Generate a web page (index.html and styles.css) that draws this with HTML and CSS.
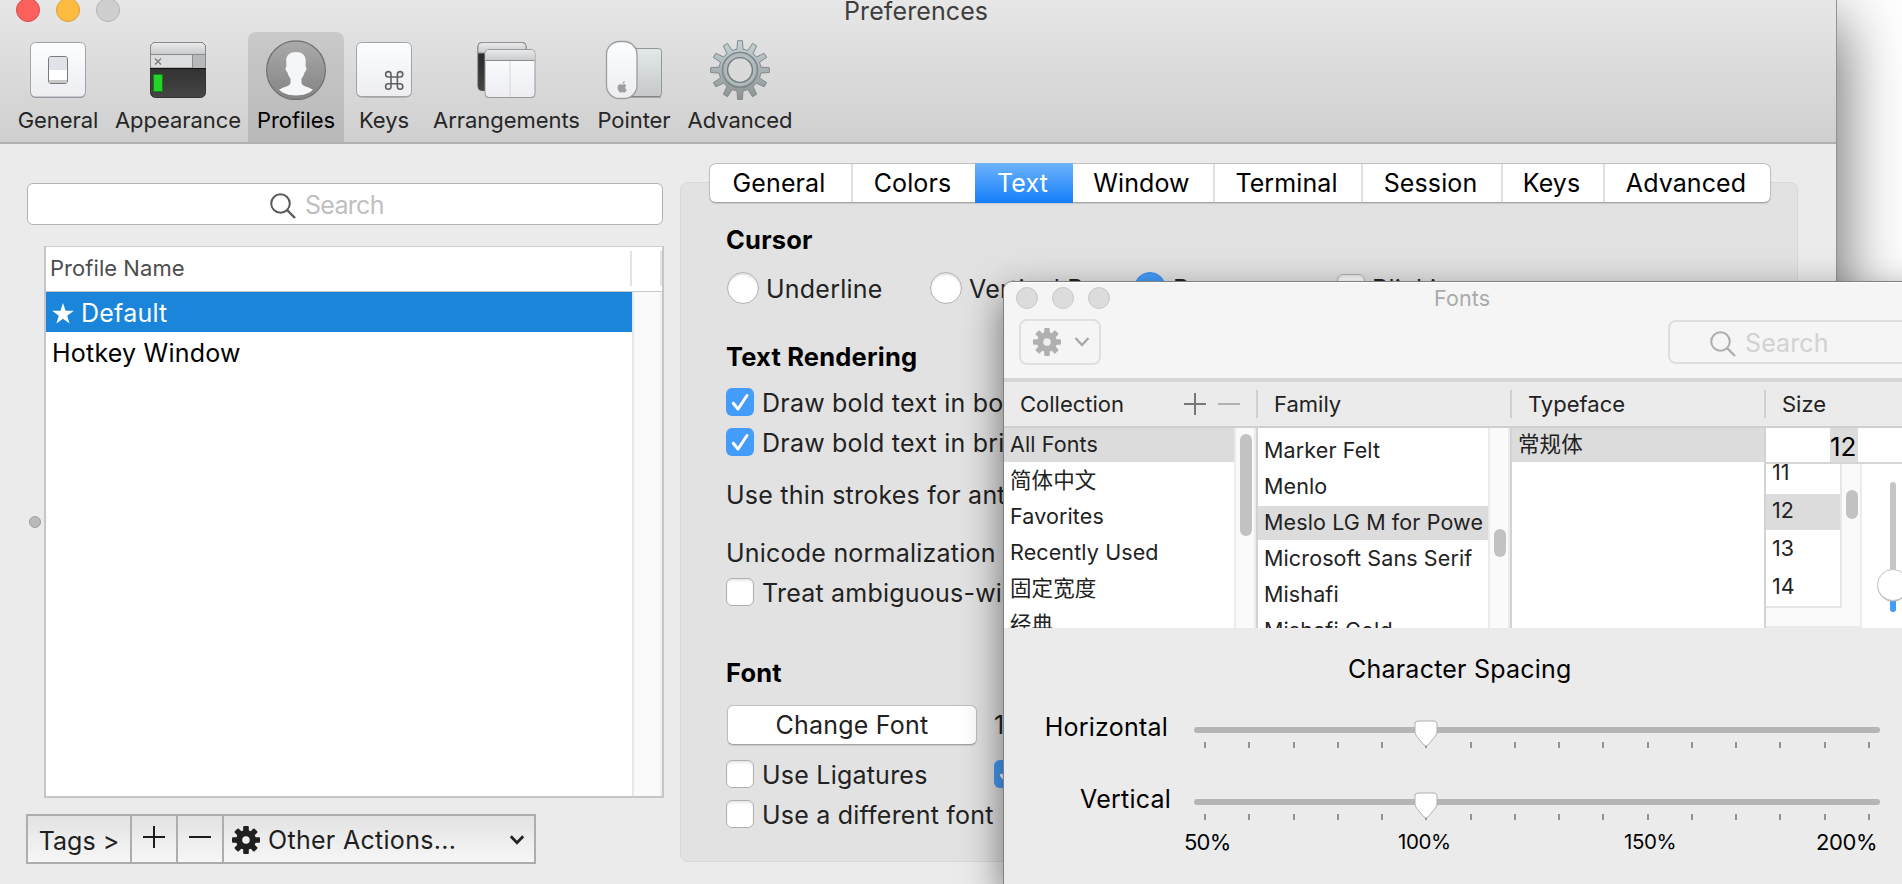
FILE: index.html
```html
<!DOCTYPE html>
<html lang="en">
<head>
<meta charset="utf-8">
<title>Preferences</title>
<link rel="stylesheet" href="styles.css">
</head>
<body>
<svg class="defs" width="0" height="0" aria-hidden="true">
  <defs>
    <linearGradient id="white" x1="0" y1="0" x2="0" y2="1"><stop offset="0" stop-color="#fbfeff"/><stop offset="1" stop-color="#ededf2"/></linearGradient>
    <linearGradient id="bar" x1="0" y1="0" x2="0" y2="1"><stop offset="0" stop-color="#e9eaec"/><stop offset="1" stop-color="#c9cbcd"/></linearGradient>
    <linearGradient id="dark" x1="0" y1="0" x2="0" y2="1"><stop offset="0" stop-color="#222"/><stop offset="1" stop-color="#454545"/></linearGradient>
    <linearGradient id="disc" x1="0" y1="0" x2="0" y2="1"><stop offset="0" stop-color="#aaa"/><stop offset="1" stop-color="#838383"/></linearGradient>
    <linearGradient id="pad" x1="0" y1="0" x2="0" y2="1"><stop offset="0" stop-color="#e3e9e9"/><stop offset="1" stop-color="#c6c8c9"/></linearGradient>
    <linearGradient id="steel" gradientUnits="userSpaceOnUse" x1="0" y1="0" x2="0" y2="60"><stop offset="0" stop-color="#c6d3d7"/><stop offset="1" stop-color="#8b9192"/></linearGradient>
    <symbol id="gear" viewBox="-14 -14 28 28">
      <g fill="currentColor">
        <g id="cogs"><rect x="-2.8" y="-14" width="5.6" height="28" rx="1"/><rect x="-14" y="-2.8" width="28" height="5.6" rx="1"/></g>
        <use href="#cogs" transform="rotate(45)"/>
        <circle r="10"/>
      </g>
      <circle class="gear-hole" r="3.8"/>
    </symbol>
    <symbol id="lens" viewBox="0 0 26 26"><circle cx="10.5" cy="10.5" r="9.3" fill="none" stroke="currentColor" stroke-width="2"/><path d="M17 17l8 8" stroke="currentColor" stroke-width="2.4"/></symbol>
    <symbol id="tick" viewBox="0 0 28 28"><path d="M7.300 15.200l4.700 5.800 9-13.500" fill="none" stroke="#fff" stroke-width="3" stroke-linecap="round" stroke-linejoin="round"/></symbol>
  </defs>
</svg>

<main class="window prefs">
  <header class="toolbar">
    <div class="lights"><i class="light red"></i><i class="light amber"></i><i class="light idle"></i></div>
    <h1 class="title">Preferences</h1>
    <nav class="tools">
      <div class="tool w-general">
        <svg width="60" height="60" viewBox="0 0 60 60"><rect x="2.500" y="3" width="55" height="55" rx="5" fill="#8f8f94"/><rect x="2.500" y="2.500" width="55" height="54.500" rx="5" fill="url(#white)" stroke="#a2a3a8"/><rect x="20.500" y="16.500" width="19" height="27" rx="2.500" fill="#fff" stroke="#777a7e"/><rect x="21" y="17" width="18" height="13" rx="2" fill="#dfe2e7"/><rect x="21" y="40" width="18" height="3" fill="#c8c8c8"/></svg>
        <span>General</span></div>
      <div class="tool w-appearance">
        <svg width="60" height="60" viewBox="0 0 60 60"><rect x="2.500" y="2.500" width="55" height="55" rx="5" fill="url(#dark)" stroke="#333"/><path d="M2.500 28V7.500a5 5 0 0 1 5-5h45a5 5 0 0 1 5 5V28z" fill="#dcdddf" stroke="#8a8a8c"/><path d="M3 14V7.500a4.500 4.500 0 0 1 4.500-4.500h45a4.500 4.500 0 0 1 4.500 4.500V14z" fill="url(#bar)"/><rect x="44" y="15" width="13" height="13" fill="#b6b8ba"/><path d="M3 14.500h54M44.500 15v13" stroke="#8a8b8d"/><path d="M2 28.500h56" stroke="#111"/><path d="M7 18.500l6 6M13 18.500l-6 6" stroke="#777" stroke-width="1.200"/><rect x="5" y="34" width="10" height="18" rx="1" fill="#128312"/><rect x="6" y="35" width="8" height="16" fill="#25d32b"/></svg>
        <span>Appearance</span></div>
      <div class="tool w-profiles selected">
        <svg width="60" height="60" viewBox="0 0 60 60"><circle cx="30" cy="30.300" r="29.400" fill="url(#disc)" stroke="#6f6f6f" stroke-width="1.200"/><path d="M30 12c6 0 9.500 3 9.700 8.500l-.2 6c1.500.2 1.200 4.500-.8 5.500-.7 3-1.700 5-3.200 6.500v4.500c.5 3.500 6.500 3.500 11.500 6.800C43 53.500 37 55.500 30 55.500S17 53.500 13 49.800c5-3.300 11-3.300 11.500-6.800v-4.500c-1.500-1.500-2.500-3.500-3.200-6.500-2-1-2.300-5.300-.8-5.500l-.3-6.500C20.500 15 24 12 30 12z" fill="#f4f6f8"/></svg>
        <span>Profiles</span></div>
      <div class="tool w-keys">
        <svg width="60" height="60" viewBox="0 0 60 60"><rect x="2.500" y="3.500" width="55" height="54" rx="5" fill="#8f8f94"/><rect x="2.500" y="2.500" width="55" height="54" rx="5" fill="url(#white)" stroke="#a2a3a8"/><path d="M37 37h6.400v6.800H37zM37 37h-2.700a2.700 2.700 0 1 1 2.700-2.700zM43.400 37v-2.700a2.700 2.700 0 1 1 2.700 2.700zM43.400 43.800h2.700a2.700 2.700 0 1 1-2.700 2.700zM37 43.800v2.700a2.700 2.700 0 1 1-2.700-2.700z" fill="none" stroke="#5f6063" stroke-width="1.600"/></svg>
        <span>Keys</span></div>
      <div class="tool w-arrangements">
        <svg width="60" height="60" viewBox="0 0 60 60"><rect x="1" y="2.500" width="48" height="48" rx="4" fill="url(#dark)" stroke="#555"/><path d="M1 13V6.500a4 4 0 0 1 4-4h40a4 4 0 0 1 4 4V13z" fill="url(#bar)" stroke="#919193"/><rect x="8" y="10" width="50" height="48" rx="4" fill="#8f8f94"/><rect x="8" y="9.500" width="50" height="48" rx="4" fill="url(#white)" stroke="#97989a"/><path d="M8.500 20V13.500a3.500 3.500 0 0 1 3.500-3.500h42a3.500 3.500 0 0 1 3.500 3.500V20z" fill="url(#bar)"/><path d="M8.500 20.500h49" stroke="#8c8d8f"/><path d="M33 21v36" stroke="#d4d5d9"/></svg>
        <span>Arrangements</span></div>
      <div class="tool w-pointer">
        <svg width="60" height="60" viewBox="0 0 60 60"><rect x="20.500" y="8.500" width="37" height="48" rx="3" fill="url(#pad)" stroke="#949697"/><path d="M21 57h36" stroke="#777"/><rect x="2.500" y="1.500" width="30.500" height="57" rx="13" fill="url(#white)" stroke="#9c9ca0" stroke-width="1.300"/><path d="M18.500 43.800c.2-1.600 1-2.500 2.200-2.800.1 1.500-.8 2.700-2.200 2.800zM18.300 44.700c1-.7 3-.8 4.100.7-1.800 1-1.500 3.500.4 4.200-.8 1.900-1.700 3.100-2.600 3-.7 0-1-.4-1.900-.4s-1.200.4-1.800.4c-1.700 0-3.900-4.600-2.500-7 1-1.700 3-1.800 4.300-.9z" fill="#9d9da2"/></svg>
        <span>Pointer</span></div>
      <div class="tool w-advanced">
        <svg width="60" height="60" viewBox="0 0 60 60"><g fill="url(#steel)" stroke="#7f888a" stroke-width="1"><path d="M27.0 9.200 L27.600 .7h4.800L33.0 9.200 A21 21 0 0 1 37.800 10.500 L42.600 3.400 46.700 5.900 43 13.600 A21 21 0 0 1 46.400 17 L54.200 13.300 56.600 17.400 49.500 22.200 A21 21 0 0 1 50.800 27.100 L59.300 27.700V32.500L50.800 33.100 A21 21 0 0 1 49.500 37.900L56.600 42.700 54.200 46.800 46.400 43.100A21 21 0 0 1 43 46.500L46.700 54.200 42.600 56.700 37.800 49.600A21 21 0 0 1 33 50.900L32.400 59.400H27.600L27 50.900A21 21 0 0 1 22.200 49.600L17.400 56.700 13.300 54.200 17 46.500A21 21 0 0 1 13.600 43.100L5.800 46.800 3.400 42.700 10.500 37.900A21 21 0 0 1 9.200 33.100L.7 32.500V27.700L9.200 27.100A21 21 0 0 1 10.500 22.200L3.400 17.400 5.800 13.300 13.600 17A21 21 0 0 1 17 13.600L13.300 5.900 17.400 3.400 22.200 10.500A21 21 0 0 1 27 9.200z"/></g><circle cx="30" cy="30" r="17.500" fill="none" stroke="#7d8688" stroke-width="1.500"/><circle cx="30" cy="30" r="14.500" fill="none" stroke="#b1babc" stroke-width="2.500"/><circle cx="30" cy="30" r="12.400" fill="#dadada" stroke="#737b7d" stroke-width="1.400"/></svg>
        <span>Advanced</span></div>
    </nav>
  </header>

  <div class="body">
    <aside class="sidebar">
      <div class="search"><svg width="26" height="26"><use href="#lens"/></svg><span>Search</span></div>
      <div class="split">
        <i class="grip"></i>
        <section class="table">
          <div class="thead"><span>Profile Name</span><i></i></div>
          <div class="tbody">
            <div class="rows">
              <div class="row active"><svg width="22" height="21" viewBox="0 0 22 21"><path d="M11 0l2.600 7.700 8.200.1-6.600 4.900 2.400 7.900L11 15.800l-6.600 4.800 2.400-7.900L.2 7.800l8.200-.1z" fill="#fff"/></svg><span>Default</span></div>
              <div class="row">Hotkey Window</div>
            </div>
            <div class="gutter"></div>
          </div>
        </section>
      </div>
      <div class="actions">
        <button class="act tags">Tags &gt;</button>
        <button class="act"><svg width="22" height="22" viewBox="0 0 22 22"><path d="M0 11h22M11 0v22" stroke="#1c1c1c" stroke-width="2"/></svg></button>
        <button class="act"><svg width="22" height="22" viewBox="0 0 22 22"><path d="M0 11h22" stroke="#1c1c1c" stroke-width="2"/></svg></button>
        <button class="act other"><svg class="gear" width="28" height="28"><use href="#gear"/></svg><span>Other Actions...</span><svg width="16" height="12" viewBox="0 0 16 12"><path d="M1.800 2.200L8 8.700l6.200-6.500" fill="none" stroke="#222" stroke-width="2.800"/></svg></button>
      </div>
    </aside>

    <section class="detail">
      <nav class="tabs">
        <span class="tab t1">General</span><span class="tab t2">Colors</span><span class="tab t3 on">Text</span><span class="tab t4">Window</span><span class="tab t5">Terminal</span><span class="tab t6">Session</span><span class="tab t7">Keys</span><span class="tab t8">Advanced</span>
      </nav>
      <div class="panel">
        <h2>Cursor</h2>
        <div class="line cursors">
          <label><i class="radio"></i>Underline</label>
          <label><i class="radio"></i>Vertical Bar</label>
          <label><i class="radio on"></i>Box</label>
          <label><i class="check"></i>Blinking</label>
        </div>
        <h2 class="rendering">Text Rendering</h2>
        <div class="line first-check"><i class="check on"><svg><use href="#tick"/></svg></i>Draw bold text in bold</div>
        <div class="line"><i class="check on"><svg><use href="#tick"/></svg></i>Draw bold text in bright</div>
        <div class="line plain thin">Use thin strokes for anti</div>
        <div class="line plain norm">Unicode normalization</div>
        <div class="line"><i class="check"></i>Treat ambiguous-wide</div>
        <h2 class="font">Font</h2>
        <div class="line change"><button class="push">Change Font</button><span>12</span></div>
        <div class="line ligs"><i class="check"></i><span class="lig">Use Ligatures</span><i class="check on"><svg><use href="#tick"/></svg></i></div>
        <div class="line"><i class="check"></i>Use a different font</div>
      </div>
    </section>
  </div>
</main>

<section class="window fonts">
  <header class="fonts-top">
    <div class="titlebar"><div class="lights"><i class="light idle"></i><i class="light idle"></i><i class="light idle"></i></div><h1>Fonts</h1></div>
    <div class="controls">
      <button class="menu"><svg class="gear" width="28" height="28"><use href="#gear"/></svg><svg width="16" height="12" viewBox="0 0 16 12"><path d="M1.500 2l6.500 7 6.500-7" fill="none" stroke="#a9a9a9" stroke-width="2.400"/></svg></button>
      <div class="search pale"><svg width="26" height="26"><use href="#lens"/></svg><span>Search</span></div>
    </div>
  </header>
  <div class="heads">
    <div class="head c1"><span>Collection</span><svg width="56" height="22" viewBox="0 0 56 22"><path d="M0 11h22M11 0v22" stroke="#777" stroke-width="2"/><path d="M34 11h22" stroke="#b0b0b0" stroke-width="2"/></svg></div>
    <div class="head c2">Family</div>
    <div class="head c3">Typeface</div>
    <div class="head c4">Size</div>
  </div>
  <div class="lists">
    <div class="col c1">
      <ul class="collection"><li class="sel">All Fonts</li><li>简体中文</li><li>Favorites</li><li>Recently Used</li><li>固定宽度</li><li>经典</li></ul>
      <div class="scroll"><i class="thumb long"></i></div>
    </div>
    <div class="col c2">
      <ul class="family"><li>Marker Felt</li><li>Menlo</li><li class="sel">Meslo LG M for Powe</li><li>Microsoft Sans Serif</li><li>Mishafi</li><li>Mishafi Gold</li></ul>
      <div class="scroll"><i class="thumb mid"></i></div>
    </div>
    <div class="col c3"><ul class="typeface"><li class="sel">常规体</li></ul></div>
    <div class="col c4">
      <div class="field"><span>12</span></div>
      <div class="sizes">
        <div class="sizewrap">
          <ul class="size"><li>11</li><li class="sel">12</li><li>13</li><li>14</li></ul>
          <div class="scroll"><i class="thumb small"></i></div>
        </div>
        <svg class="vslider" width="40" height="164" viewBox="0 0 40 164"><rect x="28" y="18" width="6" height="130" rx="3" fill="#c6c6c6"/><path d="M28 122h6v23a3 3 0 0 1-6 0z" fill="#439cfa"/><circle cx="31" cy="122" r="15.500" fill="#aaa"/><circle cx="31" cy="121" r="15.500" fill="#fff" stroke="#c4c4c4"/></svg>
      </div>
    </div>
  </div>
  <div class="spacing">
    <h3>Character Spacing</h3>
    <div class="srow"><span class="sname">Horizontal</span>
      <svg width="690" height="36" viewBox="0 0 690 36"><rect x="2" y="11" width="686" height="6" rx="3" fill="#b5b5b5"/><path id="ticks" d="M13 26v6M57 26v6M102 26v6M146 26v6M190 26v6M234 26v6M279 26v6M323 26v6M367 26v6M411 26v6M456 26v6M500 26v6M544 26v6M588 26v6M633 26v6M677 26v6" stroke="#929292" stroke-width="2"/><path id="knob" d="M223 8a3 3 0 0 1 3-3h16a3 3 0 0 1 3 3v8q0 2-1.500 4L236 29q-2 2-4 0L224.500 20q-1.500-2-1.500-4z" fill="#fff" stroke="#b0b0b0"/></svg></div>
    <div class="srow two"><span class="sname">Vertical</span>
      <svg width="690" height="36" viewBox="0 0 690 36"><rect x="2" y="11" width="686" height="6" rx="3" fill="#b5b5b5"/><use href="#ticks"/><use href="#knob"/></svg></div>
    <div class="scale"><span>50%</span><span class="sm">100%</span><span class="sm">150%</span><span>200%</span></div>
  </div>
</section>
</body>
</html>
```
FILE: styles.css
```css
* { box-sizing: border-box; }
body { margin: 0; width: 1902px; height: 884px; overflow: hidden; position: relative; background: #fff; color: #222;
  font: 25px/40px Inter, "Noto Sans CJK SC", sans-serif; letter-spacing: 0.22px; }
h1, h2, h3, ul { margin: 0; padding: 0; list-style: none; font-weight: 400; font-size: inherit; }
button { font: inherit; letter-spacing: inherit; color: inherit; padding: 0; margin: 0; border: 0; background: none; }
svg { display: block; flex: none; }
i { display: block; flex: none; }
.defs { position: absolute; }
.window { position: absolute; }
.gear-hole { fill: #efefef; }

/* Preferences window */
.prefs { left: -40px; top: -40px; width: 1876px; height: 924px; padding: 40px 0 0 40px; background: #ebebeb; box-shadow: 0 0 0 1px #929292, 4px 60px 62px rgba(0,0,0,.62); }
.toolbar { height: 144px; position: relative; background: linear-gradient(#e7e7e7, #cfcfcf); border-bottom: 2px solid #b0b0b0; overflow: hidden; }
.lights { display: flex; }
.light { width: 24px; height: 24px; border-radius: 50%; border: 1px solid; }
.toolbar .lights { gap: 16px; padding-left: 16px; margin-top: -2px; height: 24px; }
.red { background: #fc615d; border-color: #dd4a46; }
.amber { background: #fdbc40; border-color: #dc9d34; }
.idle { background: #cfcfcf; border-color: #b4b4b4; }
.title { position: absolute; left: 844px; top: 0; line-height: 22px; color: #3e3e3e; letter-spacing: 0.1px; }
.tools { display: flex; height: 110px; margin-top: 10px; padding-left: 4px; font-size: 22px; line-height: 30px; letter-spacing: -0.05px; }
.tool { display: flex; flex-direction: column; align-items: center; padding-top: 8px; gap: 5px; white-space: nowrap; }
.tool span { color: #262626; }
.w-general { width: 108px; } .w-appearance { width: 132px; } .w-profiles { width: 96px; margin-left: 4px; }
.w-keys { width: 80px; } .w-arrangements { width: 165px; } .w-pointer { width: 90px; } .w-advanced { width: 122px; }
.selected { background: rgba(0,0,0,.105); border-radius: 8px 8px 0 0; }
.selected span { color: #000; }
.body { display: flex; height: 740px; }
.sidebar { width: 680px; padding: 39px 0 0 26px; }
.search { display: flex; gap: 9px; height: 42px; width: 636px; margin-left: 1px; padding: 9px 0 0 242px; background: #fff; border: 1px solid #b2b2b2; border-radius: 6px; color: #5a5a5a; }
.search span { line-height: 40px; margin-top: -8px; color: #bfbfbf; letter-spacing: -0.7px; }
.split { display: flex; align-items: center; gap: 4px; margin-top: 21px; height: 552px; }
.grip { width: 12px; height: 12px; border-radius: 50%; background: #bababa; border: 1px solid #9f9f9f; margin-left: 3px; margin-right: -1px; }
.table { width: 620px; height: 552px; border: 2px solid #c6c6c6; border-top: 1px solid #cfcfcf; background: #fff; display: flex; flex-direction: column; }
.thead { height: 45px; border-bottom: 1px solid #c9c9c9; display: flex; justify-content: space-between; padding: 4px 0 0 4px; font-size: 22px; line-height: 34px; color: #4d4d4d; letter-spacing: 0.05px; }
.thead i { width: 32px; height: 35px; border-left: 2px solid #e3e3e3; border-right: 2px solid #e3e3e3; }
.tbody { display: flex; flex: 1; }
.rows { width: 586px; }
.row { height: 40px; padding: 2px 0 0 6px; color: #000; line-height: 40px; display: flex; align-items: center; gap: 7px; }
.active { background: #1a85db; color: #fff; }
.gutter { flex: 1; background: #fafafa; border-left: 2px solid #e8e8e8; border-right: 2px solid #eee; }
.actions { display: flex; width: 510px; height: 50px; margin-top: 16px; border: 2px solid #adadad; background: linear-gradient(#e2e2e2, #f7f7f7); color: #1f1f1f; }
.act { width: 46px; border-left: 2px solid #adadad; display: flex; align-items: center; justify-content: center; padding-bottom: 4px; }
.tags { width: 102px; border-left: 0; padding: 3px 0 0; letter-spacing: 0; }
.other { flex: 1; justify-content: flex-start; gap: 8px; padding: 2px 9px 0 8px; letter-spacing: 0.3px; }
.other span { margin-right: auto; }

/* Profile settings */
.detail { width: 1118px; padding-top: 19px; }
.tabs { display: flex; position: relative; width: 1062px; height: 40px; margin-left: 29px; background: #fff; border: 1px solid #c0c0c0; border-bottom-color: #a6a6a6; border-radius: 7px; color: #000; box-shadow: 0 1px 1px rgba(0,0,0,.12); }
.tab { text-align: center; line-height: 39px; border-left: 2px solid #e0e0e0; letter-spacing: 0.1px; padding-right: 3px; }
.t1 { width: 141px; border: 0; } .t2 { width: 124px; } .t3 { width: 98px; } .t4 { width: 140px; border: 0; } .t5 { width: 148px; } .t6 { width: 140px; } .t7 { width: 102px; } .t8 { width: 167px; }
.tab.on { color: #fff; border: 0; background: linear-gradient(#6db3fa, #157efb); margin: -1px 0; line-height: 41px; }
.panel { height: 680px; margin-top: -21px; padding: 37px 0 0 45px; background: #e2e2e2; border: 1px solid #d8d8d8; border-radius: 8px; white-space: nowrap; overflow: hidden; }
h2 { font-weight: 700; font-size: 25.500px; color: #000; letter-spacing: 0.2px; }
.line { display: flex; align-items: center; gap: 8px; height: 40px; }
.cursors { margin-top: 9px; gap: 0; }
.cursors label { display: flex; align-items: center; width: 204px; gap: 7px; flex: none; }
.cursors label:first-child { padding-left: 1px; }
.cursors label:nth-child(3) { width: 203px; }
.radio { width: 32px; height: 32px; border-radius: 50%; background: #fff; border: 1px solid #b2b2b2; box-shadow: inset 0 2px 2px #e2e2e2; margin-bottom: 2px; }
.radio.on { background: #439cfa; border-color: #3b8fe8; box-shadow: none; }
.check { width: 28px; height: 28px; border-radius: 6px; background: #fff; border: 1px solid #b0b0b0; box-shadow: inset 0 2px 2px #e8e8e8; margin-bottom: 2px; }
.check.on { background: #439cfa; border: 0; box-shadow: none; }
.check svg { width: 28px; height: 28px; }
.rendering { margin-top: 28px; }
.first-check { margin-top: 6px; }
.thin { margin-top: 12px; }
.norm { margin-top: 18px; }
.font { margin-top: 40px; }
.change { margin-top: 12px; gap: 17px; padding-left: 1px; }
.push { width: 250px; height: 40px; line-height: 37px; border-radius: 6px; background: #fff; border: 1px solid #bebebe; border-bottom-color: #a3a3a3; box-shadow: 0 1px 1px rgba(0,0,0,.12); }
.ligs { margin-top: 10px; }
.lig { width: 224px; }

/* Fonts window */
.fonts { left: 1004px; top: 282px; width: 980px; height: 602px; background: #ebebeb; border-top: 1px solid #fff; border-radius: 8px 0 0 0; box-shadow: 0 0 0 1px #808080, 0 14px 40px rgba(0,0,0,.55); font-size: 21.500px; letter-spacing: 0.12px; }
.fonts-top { height: 95px; background: #f5f5f5; border-radius: 8px 0 0 0; }
.titlebar { display: flex; height: 36px; padding: 4px 0 0 12px; }
.fonts .lights { gap: 14px; width: 418px; }
.fonts .light { width: 22px; height: 22px; background: #dcdcdc; border-color: #c9c9c9; }
.titlebar h1 { color: #aaa; line-height: 22px; }
.controls { display: flex; justify-content: space-between; height: 46px; }
.menu { width: 82px; height: 46px; margin-left: 15px; border: 2px solid #dfdfdf; border-radius: 8px; display: flex; align-items: center; justify-content: center; gap: 13px; color: #b0b0b0; padding-left: 3px; }
.menu .gear-hole { fill: #f5f5f5; }
.pale { width: 316px; height: 44px; margin-top: 1px; background: transparent; border: 2px solid #dedede; border-radius: 8px; padding: 9px 0 0 40px; color: #aeaeae; font-size: 25px; }
.pale span { color: #d2d2d2; letter-spacing: 0.1px; }
.heads { display: flex; height: 50px; border-top: 4px solid #d5d5d5; border-bottom: 2px solid #d0d0d0; padding-top: 8px; color: #222; }
.head { height: 28px; line-height: 28px; border-left: 2px solid #cfcfcf; padding-left: 16px; font-size: 22px; letter-spacing: 0; }
.head.c1 { border: 0; display: flex; justify-content: space-between; align-items: center; padding: 0 16px 0 16px; }
.c1 { width: 252px; } .c2 { width: 254px; } .c3 { width: 254px; } .c4 { width: 220px; }
.lists { display: flex; height: 200px; overflow: hidden; background: #fff; }
.col { display: flex; height: 200px; border-left: 2px solid #d2d2d2; overflow: hidden; }
.col.c1 { border: 0; }
.col ul { width: 230px; flex: none; white-space: nowrap; overflow: hidden; }
.col li { height: 34px; line-height: 33px; margin-bottom: 2px; padding-left: 6px; }
.col .family { padding-top: 6px; }
.col .typeface { width: 252px; }
.sel { background: #dcdcdc; }
.scroll { width: 22px; background: #fafafa; border-left: 2px solid #ebebeb; border-right: 2px solid #ebebeb; padding: 6px 0 0 4px; }
.thumb { width: 12px; border-radius: 6px; background: #c2c2c2; }
.long { height: 102px; } .mid { height: 28px; margin-top: 95px; } .small { height: 29px; margin-top: 20px; }
.col.c4 { flex-direction: column; }
.field { height: 36px; border-bottom: 2px solid #d5d5d5; flex: none; color: #000; }
.field span { display: block; width: 28px; height: 34px; line-height: 37px; margin-left: 64px; font-size: 26px; letter-spacing: 0; background: #dcdcdc; }
.sizes { display: flex; height: 164px; }
.sizewrap { display: flex; width: 96px; height: 164px; background: #fafafa; border-right: 2px solid #ebebeb; border-bottom: 2px solid #ebebeb; }
.col .size { width: 76px; height: 144px; background: #fff; border-right: 2px solid #e6e6e6; border-bottom: 2px solid #e6e6e6; }
.col .size li { height: 36px; margin-bottom: 2px; line-height: 33px; }
.col .size li:first-child { height: 30px; margin-bottom: 0; line-height: 17px; }
.sizewrap .scroll { border: 0; width: 18px; }
.spacing { padding-top: 30px; color: #000; font-size: 25px; letter-spacing: 0.22px; }
h3 { line-height: 22px; padding-left: 344px; }
.srow { display: flex; align-items: center; gap: 24px; height: 36px; margin-top: 36px; }
.sname { width: 164px; text-align: right; line-height: 28px; margin-bottom: 14px; flex: none; }
.two { gap: 21px; } .two .sname { width: 167px; }
.scale { display: flex; font-size: 22px; line-height: 28px; margin-top: 4px; padding-left: 180px; }
.scale span { width: 214px; flex: none; letter-spacing: -0.8px; }
.scale .sm { width: 226px; font-size: 20.500px; letter-spacing: -0.4px; }
.scale .sm + .sm { width: 192px; }
.scale span:last-child { width: 90px; letter-spacing: -0.4px; }
```
